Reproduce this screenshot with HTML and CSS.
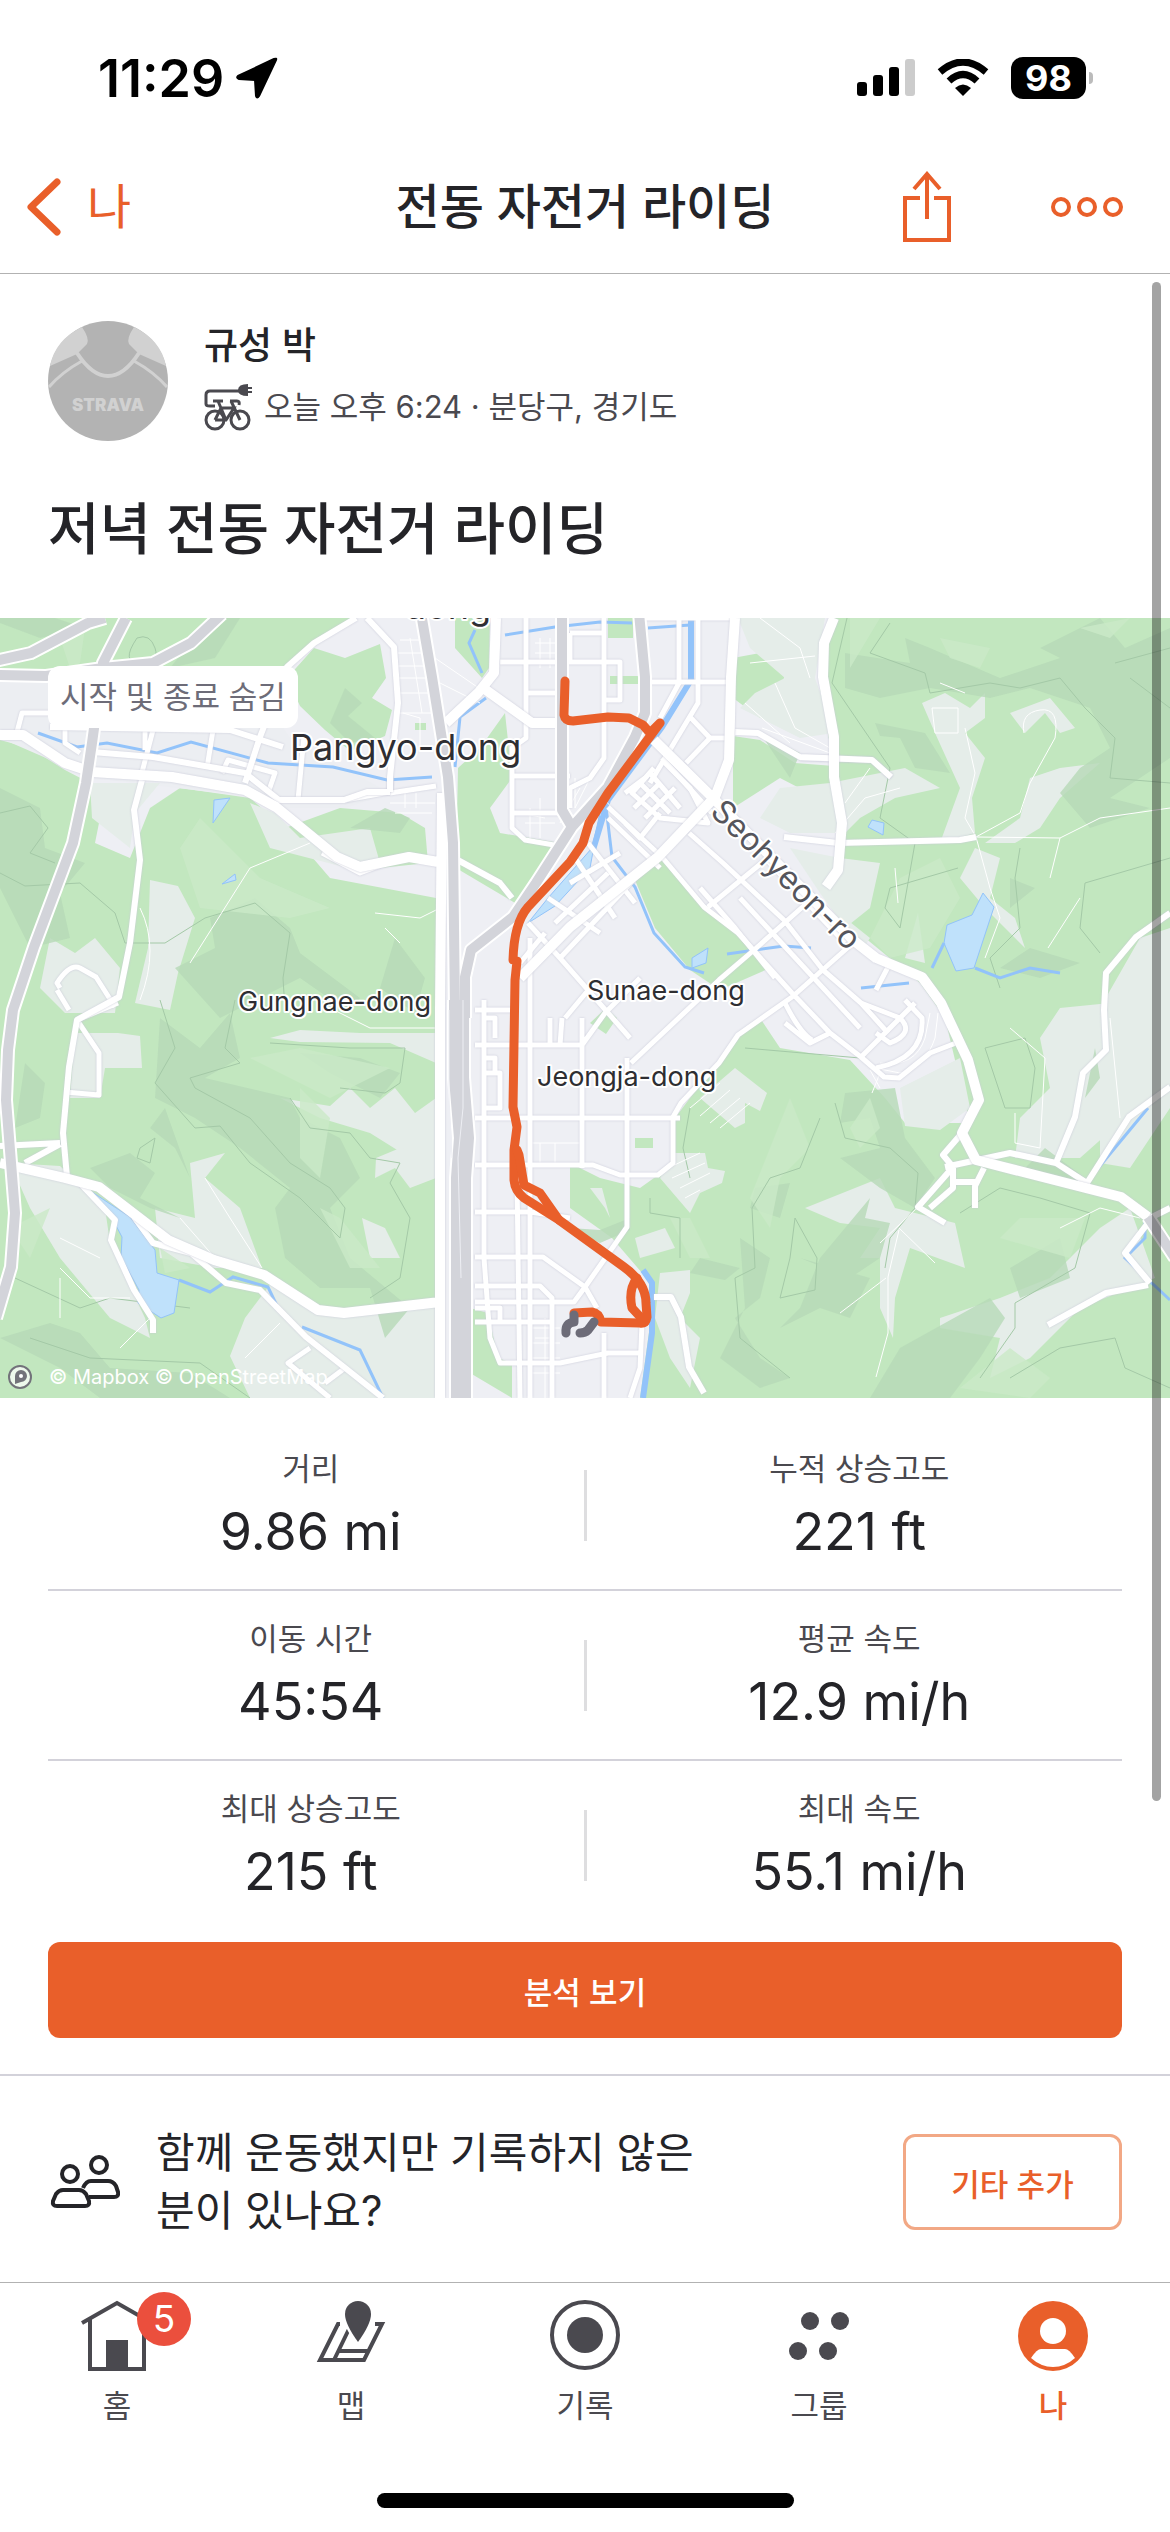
FILE: index.html
```html
<!DOCTYPE html>
<html lang="ko">
<head>
    <meta charset="utf-8">
    <meta name="viewport" content="width=device-width, initial-scale=1">
    <title>전동 자전거 라이딩</title>
    <link rel="stylesheet" href="styles.css">
</head>
<body>
    <div class="statusbar">
        <div class="status-left">
            <span class="clock">11:29</span>
            <svg width="42" height="42" viewBox="0 0 42 42"><path d="M40 3Q41 1 38 2L2 19Q0 21 3 22L19 23L20 39Q21 42 23 39Z" fill="#000" stroke="#000" stroke-width="2" stroke-linejoin="round"/></svg>
        </div>
        <div class="status-right">
            <svg width="58" height="38" viewBox="0 0 58 38">
                <rect x="0" y="23" width="10" height="14" rx="3"/>
                <rect x="16" y="16" width="10" height="21" rx="3"/>
                <rect x="32" y="8" width="10" height="29" rx="3"/>
                <rect x="48" y="0" width="10" height="37" rx="3" fill="#ccc"/>
            </svg>
            <svg width="52" height="38" viewBox="0 0 52 38">
                <path d="M26 37L18 29Q26 22 34 29Z"/>
                <path d="M12 22Q26 9 40 22" fill="none" stroke="#000" stroke-width="7"/>
                <path d="M3 13Q26 -7 49 13" fill="none" stroke="#000" stroke-width="7"/>
            </svg>
            <div class="battery">98</div>
        </div>
    </div>

    <header class="navbar">
        <a class="back" href="#">
            <svg width="34" height="58" viewBox="0 0 34 58"><path d="M30 4L4 29L30 54" fill="none" stroke="currentColor" stroke-width="7" stroke-linecap="round" stroke-linejoin="round"/></svg>
            <span>나</span>
        </a>
        <h1>전동 자전거 라이딩</h1>
        <div class="actions">
            <button type="button" aria-label="공유">
                <svg width="48" height="72" viewBox="0 0 48 72" fill="none" stroke="currentColor" stroke-width="4"><path d="M17 27H2V69H46V27H31M24 48V3M11 18L24 3L37 18"/></svg>
            </button>
            <button type="button" aria-label="더보기">
                <svg width="72" height="22" viewBox="0 0 72 22" fill="none" stroke="currentColor" stroke-width="4"><circle cx="10" cy="11" r="8"/><circle cx="36" cy="11" r="8"/><circle cx="62" cy="11" r="8"/></svg>
            </button>
        </div>
    </header>

    <main>
        <section class="athlete">
            <svg class="avatar" width="120" height="120" viewBox="0 0 120 120">
                <circle cx="60" cy="60" r="60" fill="#b3b3b3"/>
                <path d="M34 6Q42 18 39 23L29 33L2 45Q7 19 34 6ZM86 6Q78 18 81 23L91 33L118 45Q113 19 86 6Z" fill="#d1d1d1"/>
                <path d="M29 32Q44 55 60 55T91 32" fill="none" stroke="#d1d1d1" stroke-width="4"/>
                <path d="M34 40Q14 51 1 66M86 40Q106 51 119 66" fill="none" stroke="#d1d1d1" stroke-width="3"/>
                <text x="60" y="90" class="avatar-text">STRAVA</text>
            </svg>
            <div>
                <div class="name">규성 박</div>
                <div class="meta">
                    <svg width="48" height="48" viewBox="0 0 48 48" fill="none" stroke="#4a494f" stroke-width="3">
                        <path d="M36 8H6Q2 8 2 12V21Q2 23 6 23H11"/>
                        <path d="M44 1Q34 1 34 7T44 13V10H48V8H44V6H48V4H44Z" fill="#4a494f" stroke="none"/>
                        <circle cx="11" cy="37" r="9"/><circle cx="36" cy="37" r="9"/>
                        <path d="M9 18H19M26 18H33Q36 18 35 22M11 37L17 25H30L22 37H11M14 18L22 37M27 18L36 37"/>
                    </svg>
                    <span>오늘 오후 6:24 · 분당구, 경기도</span>
                </div>
            </div>
        </section>
        <h2>저녁 전동 자전거 라이딩</h2>

        <section class="map">
            <svg class="map-svg" viewBox="0 0 1170 780">
                <!-- 녹지 -->
                <g class="green">
                    <path d="M0 0H356L314 25L287 49L191 48L100 52L0 52Z"/>
                    <path d="M314 30L345 40L380 26L386 60L372 80L392 92L385 118L350 133L325 112L300 88L287 60Z"/>
                    <path d="M455 0H490L489 50L482 60L455 30ZM458 150L480 130L505 95L512 160L490 190L500 215L560 225L515 285L456 250Z"/>
                    <path d="M0 122L30 130L65 152L90 165L100 200L95 225L130 240L150 190L180 170L250 180L285 210L340 190L400 195L425 210L428 245L380 250L300 225L330 260L436 280V780H0Z"/>
                    <path d="M733 40L760 35L788 50L780 70L760 100L733 80ZM733 118L760 122L795 145L834 148L838 190L780 160L733 190Z"/>
                    <path d="M834 0H1170V780H640L655 670L612 620L570 590V545L600 560L640 570L675 545V500L735 420L760 400L780 430L850 442L885 480L905 505L970 505L945 400L920 365L853 310L826 275L842 205L834 150L820 70Z"/>
                    <path d="M660 240L704 292L745 322L770 350L720 372L690 352L655 310L635 262Z"/>
                    <path d="M470 690L488 695L498 740L512 745V780L470 755ZM608 0H633V20H608ZM610 58H640V66H610ZM590 405L606 390L617 400L606 416ZM635 520H653V530H635ZM98 128L110 118L120 130ZM415 105H426V112H415Z"/>
                </g>
                <g class="pale">
                    <path d="M0 60H250L290 120L390 175L345 190L280 190L245 178L92 160L0 120Z" fill="#eceef2"/>
                    <path d="M90 165H160L135 195L130 230L92 200ZM250 185L275 195L300 220L370 210L380 245L340 248L270 230Z"/>
                    <path d="M150 262L178 268L195 300L178 355L170 392L135 385L148 330ZM50 320L75 335L95 320L120 350L115 395L65 395L40 370Z"/>
                    <path d="M75 415L118 415L140 418L142 450L105 450L100 480L70 480ZM10 545L60 548L105 590L110 625L145 700L150 720L110 700L60 640L30 590Z"/>
                    <path d="M155 590L195 600L190 545L225 535L205 560L240 590L262 650L215 650L160 640ZM270 420L300 424L390 425L436 445V415H360L300 412ZM280 480L330 488L350 470L370 490L395 470L415 495L436 480V560L410 540L370 515L320 500Z"/>
                    <path d="M230 738L245 700L275 660L310 690L436 690V780H250ZM375 560L395 550L410 570L436 560V540L400 530L376 540ZM362 600L385 610L400 640L370 640Z"/>
                    <path d="M738 0H825L815 60L834 115L800 120L740 90L755 75L785 60L750 30ZM760 200L780 170L830 165L905 150L940 170L895 180L860 200L845 215H790ZM922 85L945 75L970 90L985 75V100L965 115L985 140L972 180L975 215L940 225L960 170L935 115Z"/>
                    <path d="M1010 95L1050 80L1075 110L1060 115L1045 95L1025 115ZM1060 150L1100 145L1060 180L1040 210L1015 225L985 225L1020 200L1030 160ZM790 230L840 240L880 245L870 290L845 310L820 275ZM975 230L1000 240L990 280L1015 300L1025 330L985 290L960 260Z"/>
                    <path d="M1040 420L1060 390L1110 385L1145 420L1125 500L1080 540L1015 540L1020 500L1050 470ZM1100 390L1140 320L1170 310V490L1130 550L1100 545ZM900 470L960 440L970 490L940 512L905 508ZM845 300L870 320L860 335ZM905 340L918 295L925 345Z"/>
                    <path d="M805 590L880 560L895 590L955 605L965 650L910 630L895 680L893 720L880 690L880 640L860 640L880 610L840 605ZM940 700L1000 680L1050 660L1100 610L1130 590L1155 660L1080 690L1030 740L990 760L1000 720L940 710ZM660 655L690 652L690 675L680 700L700 720L690 770L670 740L655 700ZM635 620L665 610L675 630L640 640ZM590 570L605 590L610 600L602 570Z"/>
                    <path d="M675 535L705 535L708 550L725 553L722 565L700 575L690 595L660 560ZM700 480L735 450L767 475L760 493L745 485L745 505L735 510Z"/>
                </g>
                <g class="dark">
                    <path d="M0 5L40 20L85 10L55 0H0ZM345 70L362 85L348 98L375 120L350 125L330 105ZM0 170L40 190L45 230L85 245L60 275L70 320L30 330L0 270ZM25 445L45 465L40 500L15 510ZM170 50L190 25L220 0H240L215 40Z"/>
                    <path d="M255 280L290 310L300 335L360 380L350 395L300 360L220 400L175 350L215 330L210 300ZM395 320L425 360L415 395L380 370ZM160 400L200 430L230 395L240 440L205 460L290 480L300 500L340 520L360 560L330 590L350 640L410 690L385 720L370 670L320 670L285 640L275 590L290 570L240 530L195 500L155 480Z"/>
                    <path d="M90 550L130 535L155 555L140 580L180 600L150 590L110 570ZM0 720L50 705L80 715L110 750L190 755L230 780H100L60 750ZM300 435L360 440L400 455L380 480L330 455ZM165 490L190 560L175 530L150 510ZM385 190L410 200L400 215L350 210Z"/>
                    <path d="M845 35L910 45L905 20L930 30L1000 60L1060 40L1040 30L1100 0L1125 30L1170 10V140L1110 180L1150 190L1090 210L1060 175L1080 150L1110 130L1090 90L1030 70L990 80L930 70L880 80L845 70ZM875 105L925 115L950 155L915 150L900 120L880 118Z"/>
                    <path d="M760 115L800 135L790 160L770 130ZM1010 260L1035 270L1010 290ZM970 370L1030 330L1080 345L1040 360L1000 350ZM845 475L895 470L905 520L935 560L915 590L880 570L840 540L880 530L870 500L840 505ZM1095 430L1100 460L1085 480ZM1045 530L1085 560L1080 570L1020 555Z"/>
                    <path d="M755 570L790 565L780 600L750 590ZM800 640L850 660L880 640L890 605L865 600L870 580L820 640L800 690L780 710L820 690L850 700L870 660ZM740 620L770 640L760 680L735 700L760 740L790 760L760 770L720 740L745 690ZM870 780L900 730L990 680L1005 700L980 740L950 780ZM1010 650L1060 620L1070 660L1020 680ZM700 640L740 650L725 662L690 655ZM570 610L600 612L630 600V612L600 625Z"/>
                </g>
                <g class="light">
                    <path d="M60 20L85 10L80 45L70 50ZM200 200L260 260L330 290L290 300L200 290L180 230ZM10 610L50 590L30 640ZM300 470L330 500L320 560L300 540ZM160 630L190 650L165 655ZM850 0L880 0L850 50ZM1080 10L1130 0L1110 20ZM940 20L990 30L980 50L950 40ZM870 320L900 260L940 240L960 280L930 330L890 340Z"/>
                    <path d="M790 480L810 530L780 560L770 610L750 580L770 530ZM850 510L870 480L880 510L860 530ZM670 600L690 600L710 640L690 640ZM960 770L1010 730L1050 760L1030 780ZM1085 600L1070 640L1000 620L1020 600ZM250 440L330 480L390 450L300 430ZM320 590L340 600L380 650L350 650Z"/>
                </g>
                <g class="contour">
                    <path d="M0 195L30 188L48 210L30 235L55 245M0 255L25 268L80 265L115 295L125 325L165 325L205 300L255 285L290 315L283 360L285 392M160 382L175 430L155 465L195 510L220 508L250 545L300 580L340 620L345 590L330 570L290 545L250 500L195 470L190 460L240 445L225 430L235 382"/>
                    <path d="M270 425L350 430L405 430L400 465L385 475L340 470M290 480L310 510L350 515L370 540L400 545L390 565L410 600L400 660L370 680M140 530L155 520L150 545L137 540ZM15 660L80 690L110 680L190 690M30 720L90 740L200 745L250 780M137 20Q150 15 155 30T140 45T137 20"/>
                    <path d="M847 0L832 65L890 150L880 200L915 225L900 310L885 290L890 270L958 250M890 5L870 35L925 55L930 75L990 65L1020 70L1060 60L1085 90L1115 120L1110 160L1170 165M1115 45L1170 30M1130 60L1170 90M1020 230L1015 260L1020 310L990 340L1000 370M1170 240L1085 265L1080 310L1100 335M745 430L860 440M835 485L845 520L890 530L918 555L915 590L890 620L885 650M820 500L800 550L770 560L752 590L755 650L735 660L740 720L790 760M795 600L790 640L780 680L815 672L817 640ZM690 490L683 530L690 560M650 580L650 595L680 600L680 640M985 430L1025 420L1035 450L1030 490L1005 490ZM960 595L1000 570L1040 580L1090 595L1075 650L1015 685L1015 710L980 760M1010 760L1060 730L1115 720L1125 750L1170 770"/>
                </g>
                <!-- 물 -->
                <g class="lake">
                    <path d="M92 574L130 599L155 632L157 655L179 662L174 695L161 700L138 685L139 672L121 639L122 619L113 602Z"/>
                    <path d="M983 275L994 289L974 350L956 353L944 325L947 307L972 297Z"/>
                    <path d="M872 202L884 205L883 217L868 209ZM692 340L708 330L706 345L692 350ZM214 182L230 180L213 205ZM222 266L235 256L236 262Z"/>
                    <path d="M528 305L548 280L592 230L600 195L590 250L555 288Z"/>
                </g>
                <g class="stream">
                    <path d="M179 662L210 674L233 659L268 669L279 692M302 709L360 732L383 780M38 115L77 129L107 125L157 135L191 124L268 145L333 149L387 162L432 159M455 149L460 99L486 80M475 12L469 25L482 55M606 189L612 239L635 269L654 315L685 349L704 355M727 336L784 328L811 330M944 325L932 350M975 350L1000 360L1030 350L1060 355M861 370L909 365M1148 490L1090 560M1145 600V620L1125 640L1170 682M505 17L555 9L600 4L632 5M648 10L690 7"/>
                    <path class="river" d="M691 0V62L662 109L608 182L593 232M643 652L652 665V715L643 780"/>
                </g>
                <!-- 골목길 -->
                <g class="road minor">
                    <path d="M400 22H425M398 35H425M398 48H425M398 60H428M398 75H430M395 95H432M410 20L422 95M403 95L420 100V130M435 40L486 75M440 65L480 85M390 185H435M395 195H432M405 175V190M416 175V190"/>
                    <path d="M535 25H555M535 35H555M540 20V50M550 20V50M575 160V190M520 195L545 200M525 205H555M540 180V220M530 190V225M603 180L640 220M560 205L580 170M575 190L590 160"/>
                    <path d="M750 45L815 38M760 0L800 30L810 60M745 85L790 125M775 65L795 110L830 130M762 110L830 135M835 215L865 180L900 170M870 150L845 185M932 90H958V115H935ZM965 75L940 65M965 110L975 155L965 200L976 219M1024 115Q1020 95 1040 92T1055 120L1030 165L1020 195L976 219L1060 220L1100 200L1170 190M976 219L990 270L1000 300L985 340M1050 260L1060 220M895 250L898 285M1048 330L1080 280M1010 410L1045 440L1040 530L1015 525V495M1110 400L1120 500M1060 610L1100 590L1140 600M899 612L888 659V715L876 759M886 660L840 695M899 610L935 645M918 589L880 625"/>
                    <path d="M205 560L230 600L262 650M180 600L215 640M60 620L100 640M60 650L90 680H130M60 700V660M120 730L150 700M245 740L280 705M190 345L250 250L310 225M140 382Q160 330 140 290M375 295L420 300L440 290M385 310L400 325M330 390L370 410H436"/>
                    <path d="M690 490L720 465M700 498L730 472M710 505L740 480M720 510L750 485M668 550L700 535M672 560L705 545M680 570L710 555M685 580L700 572M875 450L900 455Q925 450 935 420L938 395M880 445Q915 450 925 420L930 395M870 452L880 470M880 455L872 475M530 700V780M545 700V780M530 710H560M530 725H560M530 740H560M530 755H560M535 720H550M530 525H582M540 525V545M555 525V545"/>
                </g>
                <g class="road street">
                    <path d="M526 0V120L512 130V210L525 222L560 228M604 0V140L590 160L570 170V190M679 0V65L660 100M698 0V85L650 165M500 44H620V82H604M526 75H562M570 15H604M570 44V15M650 64H731M691 100L710 120H731M710 120L686 145M512 158H570M512 195H560M640 0H735"/>
                    <path d="M608 189L662 239L704 289L738 315L792 375L830 415L861 439L884 459L899 460L930 435L956 425M689 215L723 245L784 302L823 352L861 385L888 415M662 140L712 195M769 239L708 289M807 285L754 332L719 362L631 445M853 325L792 379L738 417L719 445L681 485L673 499V545L658 557H620L593 547H475M888 349L876 372M660 195L640 220L625 205"/>
                    <path d="M654 150L632 175L660 200L708 205L690 170L665 145M640 165L670 195M650 155L680 190M625 175L645 160M634 190L660 165M645 200L675 170M608 200L660 250M588 225L635 285M575 240L615 300M548 280L600 315M570 265L620 235M555 305L608 255M528 305L560 340L630 420M560 340L640 255M545 315L520 345M700 270L735 310L775 360M740 280L800 345L860 410M765 240L845 325"/>
                    <path d="M484 382V640L490 720L500 745H560L608 735H640M530 320V780M517 560L520 780M582 400V550M627 440V609L585 669L574 684H475M475 392H517M475 427H582M475 500H680M475 594H530L570 600M475 639H543L585 669L597 690M475 668H540L552 680V780M475 704H552M500 705V690H475M604 715V780M642 706L640 750L630 780M582 427L605 395L640 360M565 400L590 370M560 427L562 400M550 427V400M484 455H500V490H484M484 440H495V455M484 400H495V420"/>
                    <path d="M785 405L810 425L830 415M785 385Q800 415 812 422M861 385L900 400Q915 415 890 425L876 415M861 439L915 385M876 450Q925 440 922 400L905 382M800 140L872 142L891 159M145 110V132M153 112L140 162M213 112L207 150M304 118L298 182M16 118L22 95H50M65 105V125L80 135M222 155L228 142L275 155L268 175M345 182L390 174L391 160M60 370L57 365Q70 345 80 350L96 359L115 389M69 392L57 372M77 402L99 435V477L65 474M118 385L77 402M322 235L360 255L400 240M310 730L288 745L330 780M345 750L325 765M390 175L436 168"/>
                </g>
                <g class="road">
                    <path d="M50 109L230 112L283 129M92 134L153 139L245 155L279 182H344L367 174H390M356 0L314 25L287 49L260 119L245 165M367 0L394 29L398 85L390 159V174M142 162L134 192L140 242L130 325L119 379L77 402L69 449L63 515L67 559M0 528L60 525M25 545L60 526M77 562L115 602L111 622L134 672L153 702V715M134 599L153 625L191 635L226 665L260 672L306 719L344 749L383 780M454 240L500 265L512 280"/>
                    <path d="M735 114L758 115L800 139L872 142L891 159M784 219L838 225L960 222L976 219M1170 295L1136 319L1106 355L1104 392L1106 432L1083 455L1075 499L1056 545L1010 535L945 549M1056 545L1087 565L1129 499L1170 469M962 515L943 537L953 549L918 589L945 605M953 549V570L930 590M984 550L975 568V590M953 564H978M654 679H671L681 699L689 749L704 775M1148 667L1106 675L1048 707M1150 600L1170 590M1148 605L1125 635L1150 665"/>
                </g>
                <g class="road main">
                    <path d="M0 117H23L65 145L92 154L172 159L245 172L276 189L337 239L360 249L409 239L444 245M496 0L494 55L478 75L446 105M486 72L532 105H563M0 545L65 560L99 569L168 622L214 642L264 657L318 692L344 695L440 684M442 175L440 392V780M834 0L824 25L823 59L834 119V159L842 205L838 252L826 269"/>
                    <path d="M735 0L731 59L729 142L715 179L658 239L570 309L520 360M654 122L712 179L853 322L876 340L922 359L941 385L968 442L979 482L962 515L976 542L1121 579L1148 599"/>
                </g>
                <!-- 고속도로 -->
                <g class="casing">
                    <path d="M126 0L103 45L92 125L86 165L73 225L34 329L13 392L8 432L6 482L15 595L11 649L-4 700M-5 43L31 35L88 5L105 0M-5 57L46 58L103 50L153 45L191 25L222 -4M562 -5V192L572 209L536 265L513 299L471 332L465 359V400M639 -5L645 59V95L635 119L608 169L572 209M1148 599L1175 640M421 -5L432 59L448 159L453 225L455 392"/>
                    <path class="wide" d="M459 382V460L464 520L461 560V785"/>
                </g>
                <g class="highway">
                    <path d="M126 0L103 45L92 125L86 165L73 225L34 329L13 392L8 432L6 482L15 595L11 649L-4 700M-5 43L31 35L88 5L105 0M-5 57L46 58L103 50L153 45L191 25L222 -4M562 -5V192L572 209L536 265L513 299L471 332L465 359V400M639 -5L645 59V95L635 119L608 169L572 209M1148 599L1175 640M421 -5L432 59L448 159L453 225L455 392"/>
                    <path class="wide" d="M459 382V460L464 520L461 560V785"/>
                </g>
                <path d="M449 392V480L452 540M463 382V490L458 540L461 660" class="lane"/>

                <!-- 주행 경로 -->
                <g class="route">
                    <path d="M565 63L564 97Q565 103 573 103L608 99L629 100L643 107L650 115L660 105L608 175L589 205L583 225L570 244L528 289Q514 305 513 342L517 343L515 362L513 489L517 509L514 532V562Q515 573 524 580L559 602L624 649Q646 665 646 685L647 699Q646 706 640 705L601 704Q599 695 592 694L574 695"/>
                    <path d="M517 532L519 537L524 567L540 575L559 602M637 660Q628 672 632 690L645 704"/>
                </g>
                <path class="hidden-part" d="M574 697V704Q565 705 566 715M594 704L588 712Q585 715 580 715"/>

                <!-- 지명 -->
                <text x="404" y="1" class="place big">dong</text>
                <text x="290" y="142" class="place big">Pangyo-dong</text>
                <text x="238" y="393" class="place">Gungnae-dong</text>
                <text x="587" y="382" class="place">Sunae-dong</text>
                <text x="537" y="468" class="place">Jeongja-dong</text>
                <text x="0" y="0" class="place street-name" transform="translate(709 195) rotate(45)">Seohyeon-ro</text>
                <circle cx="20" cy="759" r="11" fill="#fff" fill-opacity=".7" stroke="#72727a" stroke-width="2"/>
                <path d="M15 766V758A6 6 0 1 1 21 764Z" fill="#72727a"/><circle cx="21" cy="758" r="2" fill="#fff"/>
                <text x="49" y="766" class="credit">© Mapbox © OpenStreetMap</text>
            </svg>
            <span class="map-badge">시작 및 종료 숨김</span>
        </section>

        <section class="stats">
            <div class="stat-row">
                <dl><dt>거리</dt><dd>9.86 mi</dd></dl>
                <i></i>
                <dl><dt>누적 상승고도</dt><dd>221 ft</dd></dl>
            </div>
            <div class="stat-row">
                <dl><dt>이동 시간</dt><dd>45:54</dd></dl>
                <i></i>
                <dl><dt>평균 속도</dt><dd>12.9 mi/h</dd></dl>
            </div>
            <div class="stat-row">
                <dl><dt>최대 상승고도</dt><dd>215 ft</dd></dl>
                <i></i>
                <dl><dt>최대 속도</dt><dd>55.1 mi/h</dd></dl>
            </div>
            <button type="button" class="btn-primary">분석 보기</button>
        </section>

        <section class="invite">
            <svg width="72" height="54" viewBox="0 0 72 54" fill="none" stroke="#242428" stroke-width="4" stroke-linejoin="round">
                <circle cx="51" cy="10" r="8"/><circle cx="22" cy="19" r="8"/>
                <path d="M15 35H31Q35 35 38 39L41 46Q42 51 37 51H9Q4 51 5 46L8 39Q11 35 15 35Z"/>
                <path d="M35 33Q38 26 43 26H60Q65 26 68 31L70 37Q71 42 66 42H41"/>
            </svg>
            <p>함께 운동했지만 기록하지 않은<br>분이 있나요?</p>
            <button type="button" class="btn-outline">기타 추가</button>
        </section>
    </main>

    <nav class="tabbar">
        <a href="#">
            <span class="tab-icon">
                <svg width="72" height="72" viewBox="0 0 72 72"><path d="M1 23L36 3L71 23M9 19V69H63V19" fill="none" stroke="#4a494f" stroke-width="4"/><path d="M25 40H47V70H25Z" fill="#4a494f"/></svg>
                <b class="count">5</b>
            </span>
            <span>홈</span>
        </a>
        <a href="#">
            <span class="tab-icon">
                <svg width="72" height="72" viewBox="0 0 72 72" fill="none" stroke="#4a494f" stroke-width="4"><path d="M25 24H23L5 60H49L67 24H60M34 29L19 60M24 51H53"/><path d="M43 42Q30 24 30 14A13 13 0 0 1 56 14Q56 24 43 42Z" fill="#4a494f" stroke="#fff" stroke-width="5" paint-order="stroke"/></svg>
            </span>
            <span>맵</span>
        </a>
        <a href="#">
            <span class="tab-icon">
                <svg width="72" height="72" viewBox="0 0 72 72"><circle cx="36" cy="35" r="33" fill="none" stroke="#4a494f" stroke-width="4"/><circle cx="36" cy="35" r="18" fill="#4a494f"/></svg>
            </span>
            <span>기록</span>
        </a>
        <a href="#">
            <span class="tab-icon">
                <svg width="72" height="72" viewBox="0 0 72 72" fill="#4a494f"><circle cx="27" cy="21" r="9"/><circle cx="57" cy="21" r="9"/><circle cx="15" cy="51" r="9"/><circle cx="45" cy="51" r="9"/></svg>
            </span>
            <span>그룹</span>
        </a>
        <a href="#" class="active">
            <span class="tab-icon">
                <svg width="72" height="72" viewBox="0 0 72 72"><circle cx="36" cy="36" r="35" fill="#e95f2a"/><circle cx="36" cy="31" r="13" fill="#fff"/><path d="M24 49H48Q52 49 58 58Q48 67 36 67T14 58Q20 49 24 49Z" fill="#fff"/></svg>
            </span>
            <span>나</span>
        </a>
    </nav>
    <div class="home-indicator"></div>
    <div class="scrollbar"></div>
</body>
</html>
```
FILE: styles.css
```css
* {
    box-sizing: border-box;
}

body {
    position: relative;
    display: flex;
    flex-direction: column;
    min-height: 100vh;
    margin: 0;
    background: #fff;
    color: #242428;
    font-family: Inter, "Noto Sans CJK KR", sans-serif;
    font-size: 31px;
}

h1, h2, p, dl, dd {
    margin: 0;
}

svg {
    display: block;
    flex: none;
}

a {
    color: inherit;
    text-decoration: none;
}

button {
    padding: 0;
    border: 0;
    background: none;
    color: #e95f2a;
    font: inherit;
}

/* 상태 표시줄 */
.statusbar {
    display: flex;
    justify-content: space-between;
    padding: 48px 76px 0 98px;
    height: 132px;
    color: #000;
}

.status-left,
.status-right {
    display: flex;
    align-items: center;
    height: 60px;
}

.status-left {
    gap: 12px;
}

.status-right {
    gap: 22px;
}

.clock {
    font-size: 52px;
    font-weight: 600;
}

.battery {
    position: relative;
    width: 75px;
    height: 42px;
    margin-right: 8px;
    border-radius: 12px;
    background: #000;
    color: #fff;
    font-size: 36px;
    font-weight: 700;
    line-height: 42px;
    text-align: center;
}

.battery::after {
    content: "";
    position: absolute;
    top: 15px;
    right: -7px;
    width: 4px;
    height: 12px;
    border-radius: 0 4px 4px 0;
    background: #bbb;
}

/* 상단 메뉴 */
.navbar {
    display: grid;
    grid-template-columns: 1fr auto 1fr;
    align-items: center;
    height: 142px;
    padding: 8px 47px 0 27px;
    border-bottom: 1px solid #b2b2b2;
    color: #242428;
}

.navbar h1 {
    padding-left: 20px;
    font-size: 48px;
    font-weight: 500;
    line-height: 60px;
}

.back {
    display: flex;
    align-items: center;
    gap: 26px;
    color: #e95f2a;
    font-size: 48px;
    line-height: 60px;
}

.actions {
    display: flex;
    align-items: center;
    justify-content: flex-end;
    gap: 100px;
}

/* 프로필 */
.athlete {
    display: flex;
    gap: 36px;
    padding: 47px 48px 0;
}

.name {
    font-size: 37px;
    font-weight: 500;
    line-height: 50px;
}

.meta {
    display: flex;
    align-items: center;
    gap: 12px;
    margin-top: 12px;
    color: #4a494f;
    line-height: 48px;
}

.avatar-text {
    font-size: 17px;
    font-weight: 900;
    fill: #d1d1d1;
    text-anchor: middle;
}

h2 {
    padding: 48px 48px 49px;
    font-size: 56px;
    font-weight: 500;
    line-height: 80px;
}

/* 지도 */
.map {
    position: relative;
    background: #eeeff4;
}

.map-svg {
    width: 100%;
    height: auto;
    overflow: hidden;
}

.map-badge {
    position: absolute;
    top: 48px;
    left: 48px;
    padding: 0 12px;
    border-radius: 12px;
    background: #fff;
    color: #6d6c78;
    line-height: 62px;
}

.green { fill: #c2e7bf; }
.pale { fill: #e5ede9; }

.dark {
    fill: #b7dab8;
    opacity: .8;
}

.light {
    fill: #cbeac8;
    opacity: .8;
}

.contour {
    fill: none;
    stroke: #a4c9a7;
    stroke-width: 1px;
    stroke-linejoin: round;
}

.lake {
    fill: #bfe1fb;
    stroke: #92c3fa;
    stroke-width: 1px;
}

.stream {
    fill: none;
    stroke: #92c3fa;
    stroke-width: 3px;
}

.stream .river {
    stroke-width: 6px;
}

.road {
    fill: none;
    stroke: #fff;
    stroke-width: 6px;
    stroke-linejoin: round;
    filter: drop-shadow(0 0 1px #c9cad8);
}

.road.minor {
    stroke-width: 1px;
    filter: none;
}

.road.street {
    stroke-width: 5px;
}

.road.main {
    stroke-width: 10px;
}

.casing,
.highway {
    fill: none;
    stroke: #fff;
    stroke-width: 14px;
    stroke-linejoin: round;
}

.highway {
    stroke: #d3d4da;
    stroke-width: 10px;
}

.casing .wide {
    stroke-width: 24px;
}

.highway .wide {
    stroke-width: 20px;
}

.lane {
    fill: none;
    stroke: #eeeff4;
    stroke-width: 1px;
}

.route,
.hidden-part {
    fill: none;
    stroke: #e95f2a;
    stroke-width: 9px;
    stroke-linecap: round;
    stroke-linejoin: round;
}

.hidden-part {
    stroke: #6d6c78;
}

.place {
    font-size: 27px;
    fill: #2e2e32;
    stroke: #fff;
    stroke-width: 4px;
    stroke-linejoin: round;
    paint-order: stroke;
}

.place.big {
    font-size: 36px;
}

.place.street-name {
    font-size: 32px;
    fill: #55555c;
}

.credit {
    font-size: 20px;
    fill: #fff;
}

/* 기록 */
.stats {
    padding: 23px 48px 36px;
}

.stat-row {
    display: grid;
    grid-template-columns: 1fr 3px 1fr;
    gap: 10px;
    align-items: center;
    padding: 28px 0 27px;
    border-bottom: 2px solid #d3d2da;
    text-align: center;
}

.stat-row:nth-child(3) {
    border-color: transparent;
}

.stat-row i {
    height: 71px;
    background: #dedee0;
}

.stat-row dt {
    color: #4a494f;
    line-height: 40px;
}

.stat-row dd {
    margin-top: 13px;
    font-size: 52px;
    line-height: 60px;
}

.btn-primary {
    display: block;
    width: 100%;
    height: 96px;
    margin-top: 11px;
    border-radius: 12px;
    background: #e95f2a;
    color: #fff;
    font-weight: 500;
}

.invite {
    display: flex;
    align-items: center;
    padding: 48px 48px 42px;
    border-top: 2px solid #d3d2da;
}

.invite p {
    flex: 1;
    margin-left: 36px;
    font-size: 42px;
    line-height: 58px;
}

.btn-outline {
    width: 219px;
    height: 96px;
    border: 3px solid #f2a885;
    border-radius: 12px;
    font-weight: 500;
}

/* 하단 탭 */
.tabbar {
    display: grid;
    grid-template-columns: repeat(5, 1fr);
    margin-top: auto;
    padding-top: 17px;
    border-top: 1px solid #b2b2b2;
    color: #4a494f;
}

.tabbar a {
    display: flex;
    flex-direction: column;
    align-items: center;
    gap: 14px;
    line-height: 40px;
}

.tabbar .active {
    color: #e95f2a;
    font-weight: 500;
}

.tab-icon {
    position: relative;
}

.count {
    position: absolute;
    top: -8px;
    left: 56px;
    width: 54px;
    height: 54px;
    border-radius: 50%;
    background: #eb4f3d;
    color: #fff;
    font-size: 37px;
    font-weight: 400;
    line-height: 54px;
    text-align: center;
}

.home-indicator {
    width: 417px;
    height: 15px;
    margin: 67px auto 24px;
    border-radius: 8px;
    background: #000;
}

.scrollbar {
    position: absolute;
    top: 282px;
    right: 9px;
    width: 9px;
    height: 60%;
    border-radius: 5px;
    background: rgba(0, 0, 0, .36);
}
```
